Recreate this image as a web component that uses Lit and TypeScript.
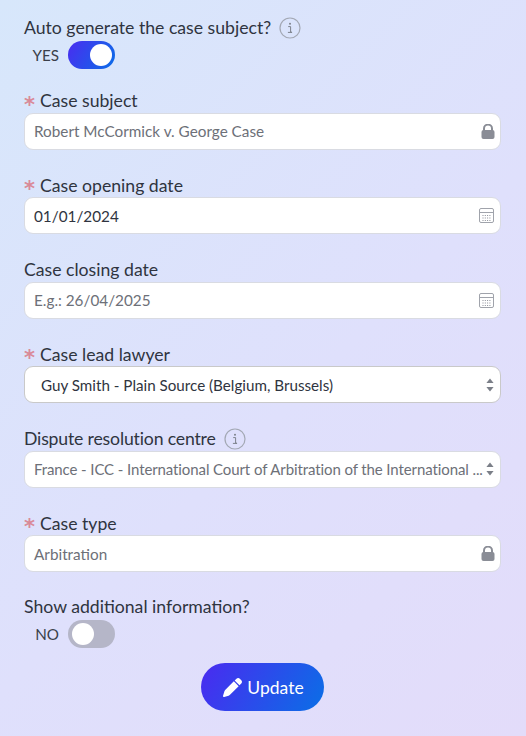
import { LitElement, html, css, svg } from "lit";
import { customElement } from "lit/decorators.js";

const info = html`<svg class="info" viewBox="0 0 22 22"><circle cx="11" cy="11" r="10" fill="none" stroke="#a3a8b4" stroke-width="1.2"/><circle cx="11" cy="6.8" r="1" fill="#7d828c"/><path d="M9.2 9.6h2.4v5.6h1.3M8.9 15.4h4.2" fill="none" stroke="#7d828c" stroke-width="1"/></svg>`;
const lock = html`<svg class="ico lock" viewBox="0 0 14 15"><path d="M3 7V4.6a4 4 0 0 1 8 0V7" fill="none" stroke="#8a8d96" stroke-width="2"/><rect x="0.5" y="6" width="13" height="9" rx="2" fill="#8a8d96"/></svg>`;
const dots = [5.5, 8, 10.5].flatMap((y) => [4, 6.3, 8.6, 10.9].map((x) => svg`<rect x="${x - 0.5}" y="${y + 1.5}" width="1" height="1" fill="#8a8d96"/>`));
const cal = html`<svg class="ico cal" viewBox="0 0 15 15"><rect x="0.5" y="0.5" width="14" height="14" rx="1.5" fill="none" stroke="#a0a3ab"/><path d="M0.5 4.5h14" stroke="#a0a3ab"/>${dots}</svg>`;
const updown = html`<svg class="ud" viewBox="0 0 8 14"><path d="M4 0.5 7.6 5H0.4Z M4 13.5 0.4 9H7.6Z" fill="#7b7f88"/></svg>`;
const pencil = html`<svg class="pen" viewBox="0 0 512 512"><path fill="#fff" d="M362.7 19.3 314.3 67.7 444.3 197.7 492.7 149.3c25-25 25-65.5 0-90.5L453.3 19.3c-25-25-65.5-25-90.5 0zM291.7 90.3 58.6 323.5c-10.4 10.4-18 23.3-22.2 37.4L1 481.2c-2.5 8.5-.2 17.6 6 23.8s15.3 8.5 23.7 6.1l120.3-35.4c14.1-4.2 27-11.8 37.4-22.2L421.7 220.3z"/></svg>`;

@customElement("app-root")
export class AppRoot extends LitElement {
  static styles = css`
    :host {
      display: block;
      width: 526px;
      height: 736px;
      box-sizing: border-box;
      padding: 17px 25px 0 24px;
      overflow: hidden;
      background: linear-gradient(135deg, #d7e7fb 0%, #dfe0fc 55%, #e3dcfa 100%);
      font-family: "Lato", "Open Sans", sans-serif;
      color: #2f3440;
    }
    .label {
      display: flex;
      align-items: center;
      height: 22px;
      font-size: 17.65px;
      line-height: 22px;
      white-space: nowrap;
    }
    .label.tight { letter-spacing: -0.17px; }
    .label.tight .info { margin-left: 8px; }
    .star {
      width: 16px;
      flex: none;
      color: #d98a98;
      font-family: "DejaVu Sans", sans-serif;
      font-size: 21px;
      font-weight: 700;
      line-height: 22px;
      padding-top: 7px;
      box-sizing: border-box;
    }
    .info { width: 22px; height: 22px; margin-left: 8px; flex: none; }
    .toggle-row { display: flex; align-items: center; height: 28px; margin-top: 2px; }
    .toggle-text { width: 35px; text-align: right; margin-right: 9px; font-size: 15.2px; color: #3a3f4a; }
    .sw { position: relative; width: 47px; height: 28px; border-radius: 14px; flex: none; }
    .sw.on { background: linear-gradient(120deg, #4a2cf0, #0a6ee8); }
    .sw.off { background: #b5b6c8; }
    .knob { position: absolute; top: 3px; width: 22px; height: 22px; border-radius: 50%; background: #fff; }
    .on .knob { right: 3px; }
    .off .knob { left: 4px; }
    .field { margin-top: 25.05px; }
    .first { margin-top: 21px; }
    .box {
      display: flex;
      align-items: center;
      height: 37px;
      margin-top: 0.5px;
      padding: 0 5px 0 9px;
      box-sizing: border-box;
      background: #fff;
      border: 1px solid #d9dbe2;
      border-radius: 9px;
      font-size: 15.3px;
      color: #6d7078;
      white-space: nowrap;
    }
    .box .t { flex: 1; min-width: 0; }
    .box.filled { color: #2f3440; }
    .box.sel {
      padding-left: 16px;
      padding-right: 6px;
      border: 1.5px solid #c9c9c9;
      color: #2f3440;
      font-size: 15.2px;
    }
    .box.dis { padding-right: 6px; font-size: 15px; letter-spacing: -0.1px; }
    .cal-box { padding-right: 6px; }
    .ico { flex: none; }
    .lock { width: 14px; height: 15px; }
    .cal { width: 15px; height: 15px; }
    .ud { width: 8px; height: 14px; flex: none; margin-left: 2px; }
    .last { margin-top: 24px; }
    .btnrow { display: flex; justify-content: center; margin-top: 15px; }
    button {
      display: flex;
      align-items: center;
      justify-content: center;
      gap: 5px;
      width: 123px;
      height: 48px;
      border: none;
      border-radius: 24px;
      padding: 0 0 0 2px;
      background: linear-gradient(120deg, #4a2af0, #0a6fe6);
      color: #fff;
      font-family: inherit;
      font-size: 17.5px;
    }
    .pen { width: 19px; height: 19px; }
  `;

  render() {
    return html`
      <div class="label">Auto generate the case subject? ${info}</div>
      <div class="toggle-row"><span class="toggle-text">YES</span><div class="sw on"><div class="knob"></div></div></div>

      <div class="field first">
        <div class="label"><span class="star">*</span>Case subject</div>
        <div class="box"><span class="t">Robert McCormick v. George Case</span>${lock}</div>
      </div>
      <div class="field">
        <div class="label"><span class="star">*</span>Case opening date</div>
        <div class="box filled cal-box"><span class="t">01/01/2024</span>${cal}</div>
      </div>
      <div class="field">
        <div class="label">Case closing date</div>
        <div class="box cal-box"><span class="t">E.g.: 26/04/2025</span>${cal}</div>
      </div>
      <div class="field">
        <div class="label"><span class="star">*</span>Case lead lawyer</div>
        <div class="box sel"><span class="t">Guy Smith - Plain Source (Belgium, Brussels)</span>${updown}</div>
      </div>
      <div class="field">
        <div class="label tight">Dispute resolution centre ${info}</div>
        <div class="box dis"><span class="t">France - ICC - International Court of Arbitration of the International ...</span>${updown}</div>
      </div>
      <div class="field">
        <div class="label"><span class="star">*</span>Case type</div>
        <div class="box"><span class="t">Arbitration</span>${lock}</div>
      </div>

      <div class="label last">Show additional information?</div>
      <div class="toggle-row"><span class="toggle-text">NO</span><div class="sw off"><div class="knob"></div></div></div>
      <div class="btnrow"><button>${pencil}Update</button></div>
    `;
  }
}
